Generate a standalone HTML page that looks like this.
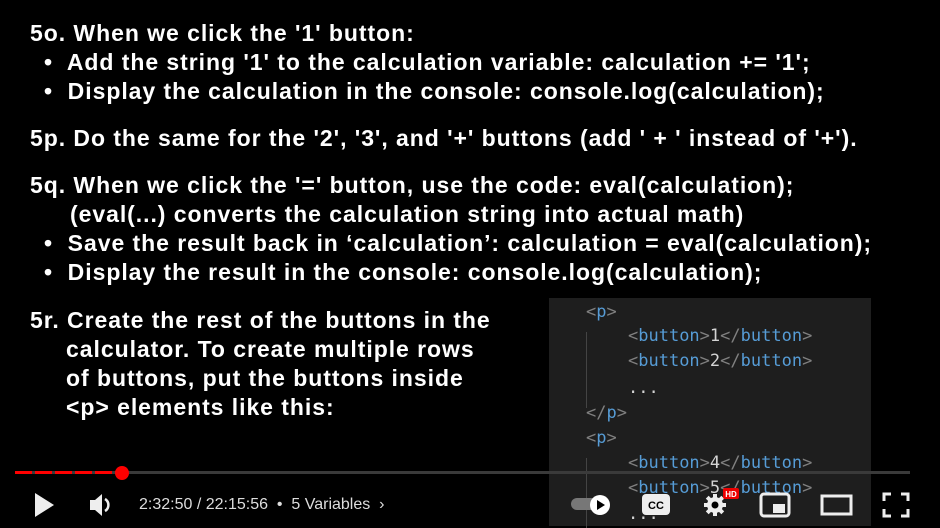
<!DOCTYPE html>
<html><head><style>
body{margin:0;width:940px;height:526px;background:#000;overflow:hidden;position:relative;font-family:"Liberation Sans",sans-serif;color:#fff}
.t{position:absolute;font-size:23px;font-weight:bold;white-space:nowrap;letter-spacing:0.95px;line-height:26px}
.code{position:absolute;left:549px;top:298px;width:322px;height:228px;background:#1e1e1e}
.c{position:absolute;font-family:"DejaVu Sans Mono","Liberation Mono",monospace;font-size:17px;color:#569cd6;white-space:nowrap;line-height:20px}
.g{color:#808080}.w{color:#d4d4d4}
.bar{position:absolute;left:15px;top:471px;width:895px;height:3px;background:#3a3a3a}
.ctl{position:absolute;color:#ddd;font-size:16px;top:496px}
</style></head><body>
<div class="t" style="left:30px;top:20px">5o. When we click the '1' button:</div>
<div class="t" style="left:44px;top:49px">•&nbsp; Add the string '1' to the calculation variable: calculation += '1';</div>
<div class="t" style="left:44px;top:78px">•&nbsp; Display the calculation in the console: console.log(calculation);</div>
<div class="t" style="left:30px;top:125px">5p. Do the same for the '2', '3', and '+' buttons (add ' + ' instead of '+').</div>
<div class="t" style="left:30px;top:172px">5q. When we click the '=' button, use the code: eval(calculation);</div>
<div class="t" style="left:70px;top:201px">(eval(...) converts the calculation string into actual math)</div>
<div class="t" style="left:44px;top:230px">•&nbsp; Save the result back in ‘calculation’: calculation = eval(calculation);</div>
<div class="t" style="left:44px;top:259px">•&nbsp; Display the result in the console: console.log(calculation);</div>
<div class="t" style="left:30px;top:307px">5r. Create the rest of the buttons in the</div>
<div class="t" style="left:66px;top:336px">calculator. To create multiple rows</div>
<div class="t" style="left:66px;top:365px">of buttons, put the buttons inside</div>
<div class="t" style="left:66px;top:394px">&lt;p&gt; elements like this:</div>
<div class="code">
<div style="position:absolute;left:37px;top:34px;width:1px;height:76px;background:#444"></div>
<div style="position:absolute;left:37px;top:160px;width:1px;height:70px;background:#444"></div>
<div class="c" style="left:37px;top:4px"><span class="g">&lt;</span>p<span class="g">&gt;</span></div>
<div class="c" style="left:79px;top:28px"><span class="g">&lt;</span>button<span class="g">&gt;</span><span class="w">1</span><span class="g">&lt;/</span>button<span class="g">&gt;</span></div>
<div class="c" style="left:79px;top:53px"><span class="g">&lt;</span>button<span class="g">&gt;</span><span class="w">2</span><span class="g">&lt;/</span>button<span class="g">&gt;</span></div>
<div class="c w" style="left:79px;top:80px">...</div>
<div class="c" style="left:37px;top:105px"><span class="g">&lt;/</span>p<span class="g">&gt;</span></div>
<div class="c" style="left:37px;top:130px"><span class="g">&lt;</span>p<span class="g">&gt;</span></div>
<div class="c" style="left:79px;top:155px"><span class="g">&lt;</span>button<span class="g">&gt;</span><span class="w">4</span><span class="g">&lt;/</span>button<span class="g">&gt;</span></div>
<div class="c" style="left:79px;top:180px"><span class="g">&lt;</span>button<span class="g">&gt;</span><span class="w">5</span><span class="g">&lt;/</span>button<span class="g">&gt;</span></div>
<div class="c w" style="left:79px;top:206px">...</div>
</div>
<div class="bar"></div>
<div style="position:absolute;left:15px;top:471px;width:107px;height:3px;background:repeating-linear-gradient(90deg,#f00 0 17px,transparent 17px 20px)"></div>
<div style="position:absolute;left:115px;top:466px;width:14px;height:14px;border-radius:50%;background:#f00"></div>
<svg style="position:absolute;left:0;top:480px" width="940" height="46">
<path d="M35 13 L54 25 L35 37Z" fill="#eee"/>
<path d="M90 20 h5 l7 -6 v22 l-7 -6 h-5z" fill="#eee"/>
<path d="M105 19 a7 7 0 0 1 0 12" stroke="#eee" stroke-width="2.5" fill="none"/>
<rect x="571" y="18" width="26" height="12" rx="6" fill="#777"/>
<circle cx="600" cy="25" r="10" fill="#fff"/><path d="M597 20 L605 25 L597 30Z" fill="#000"/>
<rect x="642" y="14" width="28" height="21" rx="4" fill="#eee"/>
<text x="656" y="29" font-family="Liberation Sans" font-weight="bold" font-size="11" text-anchor="middle" fill="#000">CC</text>
<g fill="#eee"><circle cx="715" cy="25" r="8"/><rect x="713" y="14" width="4" height="22"/><rect x="704" y="23" width="22" height="4"/><rect x="713" y="14" width="4" height="22" transform="rotate(45 715 25)"/><rect x="713" y="14" width="4" height="22" transform="rotate(-45 715 25)"/></g><circle cx="715" cy="25" r="3.5" fill="#000"/>
<rect x="723" y="8" width="16" height="11" rx="2" fill="#e00"/><text x="731" y="17" font-family="Liberation Sans" font-weight="bold" font-size="8" text-anchor="middle" fill="#fff">HD</text>
<rect x="761" y="14" width="28" height="22" rx="3" fill="none" stroke="#eee" stroke-width="3"/><rect x="773" y="24" width="12" height="9" fill="#eee"/>
<rect x="822" y="16" width="29" height="18" fill="none" stroke="#eee" stroke-width="3"/>
<path d="M884 21 v-7 h7 M901 14 h7 v7 M908 29 v7 h-7 M891 36 h-7 v-7" stroke="#eee" stroke-width="3" fill="none"/>
</svg>
<div class="ctl" style="left:139px">2:32:50 / 22:15:56 &nbsp;•&nbsp; 5 Variables &nbsp;›</div>
</body></html>
